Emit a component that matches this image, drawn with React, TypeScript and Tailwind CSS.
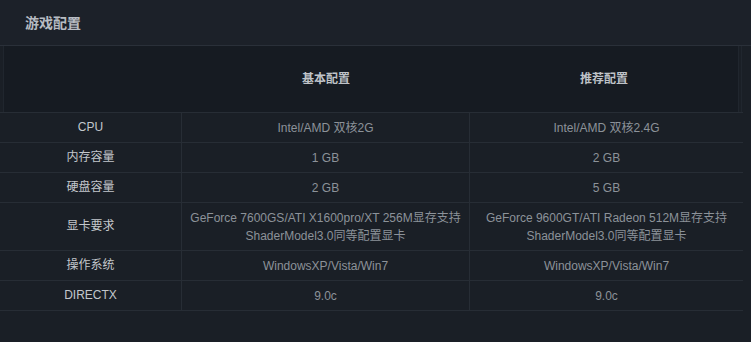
import React from "react";

const rows: { label: string; a: string[]; b: string[]; h: string }[] = [
  { label: "CPU", a: ["Intel/AMD 双核2G"], b: ["Intel/AMD 双核2.4G"], h: "h-[30px]" },
  { label: "内存容量", a: ["1 GB"], b: ["2 GB"], h: "h-[30px]" },
  { label: "硬盘容量", a: ["2 GB"], b: ["5 GB"], h: "h-[30px]" },
  {
    label: "显卡要求",
    a: ["GeForce 7600GS/ATI X1600pro/XT 256M显存支持", "ShaderModel3.0同等配置显卡"],
    b: ["GeForce 9600GT/ATI Radeon 512M显存支持", "ShaderModel3.0同等配置显卡"],
    h: "h-[48px]",
  },
  { label: "操作系统", a: ["WindowsXP/Vista/Win7"], b: ["WindowsXP/Vista/Win7"], h: "h-[30px]" },
  { label: "DIRECTX", a: ["9.0c"], b: ["9.0c"], h: "h-[30px]" },
];

const font = { fontFamily: '"Liberation Sans", "Noto Sans CJK SC", sans-serif' };

export default function App() {
  return (
    <div className="w-[751px] h-[342px] bg-[#1a1f26] overflow-hidden" style={font}>
      <div className="h-[46px] bg-[#1c2129] border-b border-[#2a3039] pl-[25px] pt-[11px]">
        <span className="text-[14px] font-bold text-[#b7bcc3] leading-[20px]">游戏配置</span>
      </div>
      <div className="w-[743px]">
        <div className="ml-[3px] w-[739px] h-[66px] flex">
          <div className="w-[736px] h-full bg-[#161b22] border-l border-r border-[#20262e] grid grid-cols-[178px_288px_1fr] items-center text-[12px] font-bold text-[#bfc3c8]">
            <div></div>
            <div className="text-center">基本配置</div>
            <div className="text-center">推荐配置</div>
          </div>
          <div className="w-[3px] h-full border-r border-[#20262e]"></div>
        </div>
        {rows.map((r) => (
          <div
            key={r.label}
            className={`grid grid-cols-[181px_288px_274px] border-t border-[#272d35] text-[12px] ${r.h}`}
          >
            <div className="flex items-center justify-center text-[#c3c7cc] leading-[15px]">
              {r.label}
            </div>
            <div className="flex flex-col items-center justify-center border-l border-[#272d35] text-[#8c9299] leading-[18px]">
              {r.a.map((t) => (
                <div key={t}>{t}</div>
              ))}
            </div>
            <div className="flex flex-col items-center justify-center border-l border-[#272d35] text-[#8c9299] leading-[18px]">
              {r.b.map((t) => (
                <div key={t}>{t}</div>
              ))}
            </div>
          </div>
        ))}
        <div className="border-t border-[#272d35]"></div>
      </div>
    </div>
  );
}
